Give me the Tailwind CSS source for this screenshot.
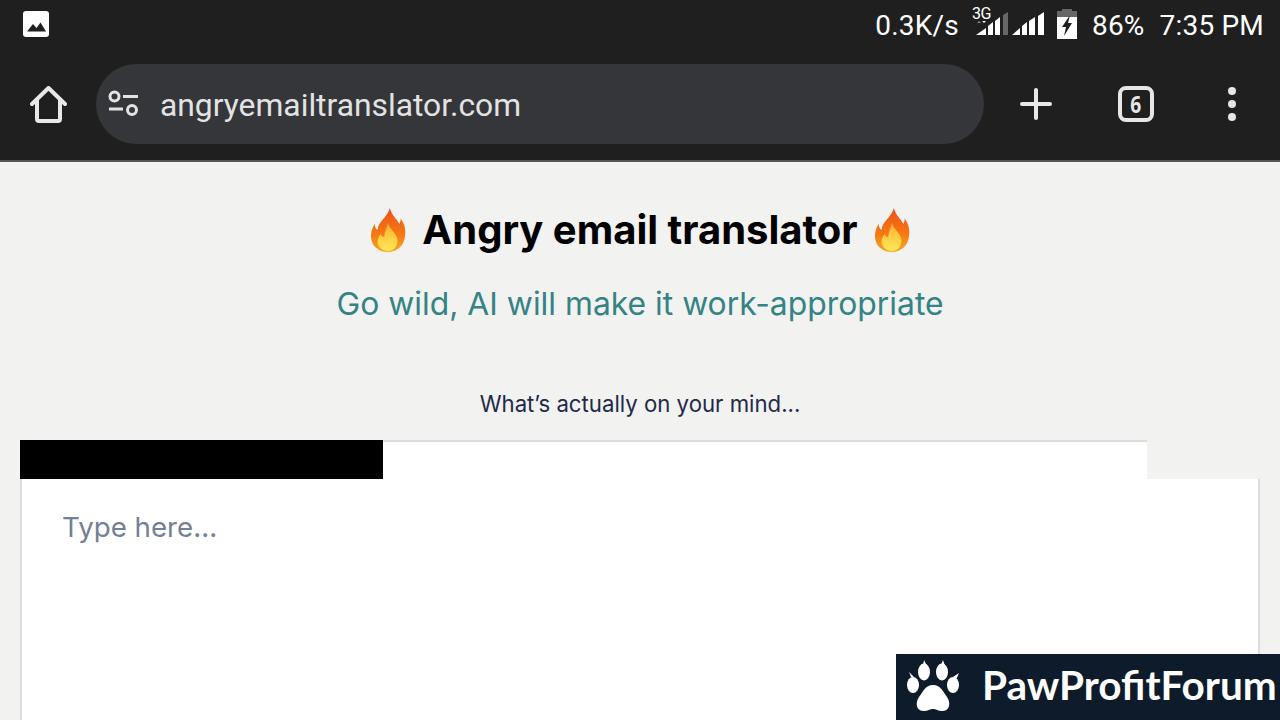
<!DOCTYPE html>
<html>
<head>
<meta charset="utf-8">
<script src="https://cdn.jsdelivr.net/npm/@tailwindcss/browser@4"></script>
</head>
<body class="m-0">
<div class="relative w-[1280px] h-[720px] overflow-hidden bg-[#f2f2f0] flex flex-col font-['Inter',sans-serif]">
  <header class="bg-[#1f1f1f] h-[160px] shrink-0 flex flex-col font-['Roboto',sans-serif]">
    <div class="h-[48px] flex items-center justify-between pl-[23px] pr-[16px] text-white">
      <svg width="26" height="26" viewBox="0 0 26 26"><rect width="26" height="26" rx="3" fill="#fff"/><path d="M4 20.500 L10 13 L13.500 17 L17.500 11.500 L23 20.500 Z" fill="#1f1f1f"/></svg>
      <div class="flex items-center text-[28px] leading-[48px] tracking-[0.2px]">
        <span class="pt-[3px]">0.3K/s</span>
        <span class="relative ml-[17px] w-[70px] h-[34px]">
          <span class="absolute left-[-4px] top-[-1px] text-[16px] leading-[16px] tracking-[-0.5px]">3G</span>
          <svg class="absolute left-0 top-0" width="70" height="34" viewBox="0 0 70 34">
            <path d="M1 16 L3 14 L5 16 Z" fill="#888"/><path d="M6 14 H10 L8 16 Z" fill="#fff"/>
            <path d="M0 28 L10 28 L10 21 Z M12 28 L17 28 L17 15 L12 19 Z M19 28 L24 28 L24 10 L19 14 Z" fill="#fff"/>
            <path d="M27 28 H32 V5 L27 8 Z" fill="#666"/>
            <path d="M36 28 L44 28 L44 21 Z M46 28 L51 28 L51 15 L46 19 Z M53 28 L59 28 L59 10 L53 14 Z M62 28 L68 28 L68 5 L62 9 Z" fill="#fff"/>
          </svg>
        </span>
        <svg class="ml-[11px]" width="20" height="30" viewBox="0 0 20 30"><rect x="5" y="0" width="10" height="3" fill="#666"/><rect y="2" width="20" height="6" fill="#666"/><rect y="8" width="20" height="22" fill="#fff"/><path d="M13 6 L5 18 L9 18 L7 27 L15 14 L11 14 Z" fill="#1f1f1f"/></svg>
        <span class="ml-[15px] pt-[3px]">86%</span>
        <span class="ml-[15px] pt-[3px]">7:35 PM</span>
      </div>
    </div>
    <div class="flex-1 flex items-start pt-[16px]">
      <div class="w-[96px] h-[80px] flex items-center justify-center">
        <svg width="37" height="37" viewBox="0 0 37 37" fill="none" stroke="#e8e8e8" stroke-width="4" stroke-linejoin="round" stroke-linecap="round"><path d="M2 18 L18.500 2 L35 18 M7 14 V33 a2 2 0 0 0 2 2 H28 a2 2 0 0 0 2 -2 V14"/></svg>
      </div>
      <div class="w-[888px] h-[80px] rounded-[40px] bg-[#35363a] flex items-center pl-[12px] text-[#e3e3e3]">
        <svg width="32" height="28" viewBox="0 0 32 28" fill="none" stroke="#e3e3e3" stroke-width="3"><circle cx="6.500" cy="6.500" r="4.500"/><path d="M15 6.500 H30 M1 19 H15"/><circle cx="24" cy="20" r="4.500"/></svg>
        <span class="ml-[20px] text-[31.800px] leading-[40px] pt-[2px]">angryemailtranslator.com</span>
      </div>
      <div class="flex-1 flex items-center h-[80px] text-[#e6e6e6]">
        <div class="w-[104px] flex justify-center">
          <svg width="32" height="32" viewBox="0 0 32 32" stroke="#e8e8e8" stroke-width="4" stroke-linecap="round"><path d="M2 16 H30 M16 2 V30"/></svg>
        </div>
        <div class="w-[96px] flex justify-center">
          <div class="w-[36px] h-[36px] border-[4px] border-[#e6e6e6] rounded-[8px] flex items-center justify-center"><span class="block text-[24px] leading-none font-bold font-['Open_Sans',sans-serif] scale-x-[0.8]">6</span></div>
        </div>
        <div class="w-[96px] flex flex-col items-center gap-[5px]">
          <span class="w-[8px] h-[8px] rounded-full bg-[#e6e6e6]"></span>
          <span class="w-[8px] h-[8px] rounded-full bg-[#e6e6e6]"></span>
          <span class="w-[8px] h-[8px] rounded-full bg-[#e6e6e6]"></span>
        </div>
      </div>
    </div>
  </header>
  <div class="h-[2px] bg-[#57574f] shrink-0"></div>
  <main class="flex-1 flex flex-col items-center pt-[42px] px-[20px]">
    <h1 class="flex items-center gap-[16px] text-[40px] leading-[52px] font-bold text-black">
      <svg width="36" height="46" viewBox="0 0 38 46" preserveAspectRatio="none"><defs><linearGradient id="a" x1="0" y1="0" x2="0" y2="1"><stop offset="0" stop-color="#ee4f1b"/><stop offset="0.6" stop-color="#f57a12"/><stop offset="1" stop-color="#f9a825"/></linearGradient><linearGradient id="b" x1="0" y1="0" x2="0" y2="1"><stop offset="0" stop-color="#fbb12d"/><stop offset="1" stop-color="#ffe857"/></linearGradient></defs><path d="M21 1 C23 9 28 11 31 17 C32 15 33 13 32 11 C36 16 38 22 37 29 C36 39 28 45 19 45 C9 45 1 39 1 29 C1 24 3 20 5 17 C5 20 6 22 8 23 C8 15 18 11 21 1 Z" fill="url(#a)"/><path d="M19 16 C20 22 30 27 29 35 C28 41 24 44 19 44 C13 44 8 40 8 34 C8 31 10 29 11 27 C12 29 13 30 15 30 C15 25 18 21 19 16 Z" fill="url(#b)"/></svg>
      <span>Angry email translator</span>
      <svg width="36" height="46" viewBox="0 0 38 46" preserveAspectRatio="none"><path d="M21 1 C23 9 28 11 31 17 C32 15 33 13 32 11 C36 16 38 22 37 29 C36 39 28 45 19 45 C9 45 1 39 1 29 C1 24 3 20 5 17 C5 20 6 22 8 23 C8 15 18 11 21 1 Z" fill="url(#a)"/><path d="M19 16 C20 22 30 27 29 35 C28 41 24 44 19 44 C13 44 8 40 8 34 C8 31 10 29 11 27 C12 29 13 30 15 30 C15 25 18 21 19 16 Z" fill="url(#b)"/></svg>
    </h1>
    <p class="mt-[26px] text-[31.850px] leading-[44px] text-[#348385]">Go wild, AI will make it work-appropriate</p>
    <p class="mt-[62px] text-[22.200px] leading-[32px] text-[#1e2a4a]">What’s actually on your mind...</p>
    <div class="mt-[20px] w-[1240px] h-[300px] shrink-0 bg-white border-[2px] border-[#dcdcdc] rounded-[16px] pt-[65px] pl-[40px] text-[27.700px] leading-[40px] text-[#718096]">Type here...</div>
  </main>
  <div class="absolute left-[20px] top-[440px] w-[363px] h-[39px] bg-black"></div>
  <div class="absolute left-[1147px] top-[440px] w-[113px] h-[39px] bg-[#f2f2f0]"></div>
  <div class="absolute left-[896px] top-[654px] w-[384px] h-[66px] bg-[#0d1b2a] flex items-center text-white">
    <svg class="ml-[10px]" width="54" height="54" viewBox="0 0 54 54" fill="#fff"><ellipse cx="7" cy="25" rx="6" ry="8"/><path d="M5 17 L3 12 L8 17 Z"/><ellipse cx="18" cy="12" rx="6" ry="8.500"/><path d="M17 5 L18 0 L21 6 Z"/><ellipse cx="36" cy="12" rx="6" ry="8.500"/><path d="M35 5 L37 0 L39 6 Z"/><ellipse cx="47" cy="25" rx="6" ry="8"/><path d="M47 17 L53 13 L50 20 Z"/><path d="M27 25 C35 25 37 32 41 37 C45 43 44 51 36 51 C32 51 30 49 27 49 C24 49 22 51 18 51 C10 51 9 43 13 37 C17 32 19 25 27 25 Z"/></svg>
    <span class="ml-[22px] text-[40.500px] leading-[62px] pb-[4px] font-bold font-['Lato',sans-serif] whitespace-nowrap">PawProfitForum</span>
  </div>
</div>
</body>
</html>
